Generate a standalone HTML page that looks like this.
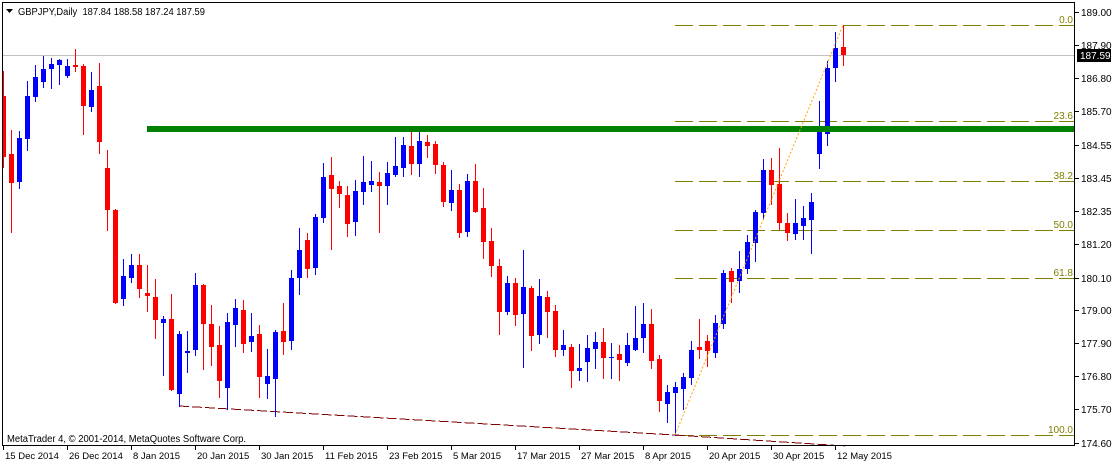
<!DOCTYPE html>
<html><head><meta charset="utf-8"><style>
html,body{margin:0;padding:0;background:#fff;}
svg{display:block;font-family:"Liberation Sans",sans-serif;}
</style></head><body>
<svg id="s" width="1115" height="464" viewBox="0 0 1115 464" xmlns="http://www.w3.org/2000/svg" shape-rendering="crispEdges">
<rect x="0" y="0" width="1115" height="464" fill="#fff"/>
<line x1="2" y1="55.5" x2="1075" y2="55.5" stroke="#c0c0c0"/>
<g stroke="#808000" stroke-dasharray="18,6">
<line x1="675" y1="25.5" x2="1075" y2="25.5"/>
<line x1="675" y1="121.5" x2="1075" y2="121.5"/>
<line x1="675" y1="181.5" x2="1075" y2="181.5"/>
<line x1="675" y1="230.5" x2="1075" y2="230.5"/>
<line x1="675" y1="278.5" x2="1075" y2="278.5"/>
<line x1="675" y1="435.5" x2="1075" y2="435.5"/>
</g>
<g fill="#808000" font-size="10" text-anchor="end">
<text x="1073" y="23">0.0</text>
<text x="1073" y="119">23.6</text>
<text x="1073" y="179">38.2</text>
<text x="1073" y="228">50.0</text>
<text x="1073" y="276">61.8</text>
<text x="1073" y="433">100.0</text>
</g>
<g stroke="#800000" stroke-dasharray="10,3" fill="none">
<line x1="179" y1="406" x2="675" y2="435"/>
<line x1="675" y1="435" x2="845" y2="446"/>
</g>
<g id="c"></g>
<rect x="147" y="126" width="928" height="6" fill="#008000"/>
<line x1="675" y1="435" x2="843" y2="25" stroke="#ffa500" stroke-dasharray="2,2" shape-rendering="auto"/>
<rect x="2.5" y="2.5" width="1072" height="443" fill="none" stroke="#000"/>
<g stroke="#000">
<line x1="1075" y1="12.5" x2="1079" y2="12.5"/><line x1="1075" y1="45.5" x2="1079" y2="45.5"/>
<line x1="1075" y1="78.5" x2="1079" y2="78.5"/><line x1="1075" y1="111.5" x2="1079" y2="111.5"/>
<line x1="1075" y1="145.5" x2="1079" y2="145.5"/><line x1="1075" y1="178.5" x2="1079" y2="178.5"/>
<line x1="1075" y1="211.5" x2="1079" y2="211.5"/><line x1="1075" y1="244.5" x2="1079" y2="244.5"/>
<line x1="1075" y1="278.5" x2="1079" y2="278.5"/><line x1="1075" y1="310.5" x2="1079" y2="310.5"/>
<line x1="1075" y1="343.5" x2="1079" y2="343.5"/><line x1="1075" y1="376.5" x2="1079" y2="376.5"/>
<line x1="1075" y1="409.5" x2="1079" y2="409.5"/><line x1="1075" y1="443.5" x2="1079" y2="443.5"/>
</g>
<g font-size="10" fill="#000">
<text x="1081" y="16">189.00</text><text x="1081" y="49">187.90</text>
<text x="1081" y="82">186.80</text><text x="1081" y="115">185.70</text>
<text x="1081" y="149">184.55</text><text x="1081" y="182">183.45</text>
<text x="1081" y="215">182.35</text><text x="1081" y="248">181.20</text>
<text x="1081" y="282">180.10</text><text x="1081" y="314">179.00</text>
<text x="1081" y="347">177.90</text><text x="1081" y="380">176.80</text>
<text x="1081" y="413">175.70</text><text x="1081" y="447">174.60</text>
</g>
<rect x="1077" y="49" width="34" height="13" fill="#000"/>
<text x="1080" y="59" font-size="10" fill="#fff">187.59</text>
<g id="d" font-size="9.5" fill="#000"></g>
<polygon points="6,9 13,9 9.5,13" fill="#000" shape-rendering="auto"/>
<text x="18" y="15" font-size="10" fill="#000" xml:space="preserve" textLength="187" lengthAdjust="spacingAndGlyphs">GBPJPY,Daily  187.84 188.58 187.24 187.59</text>
<text x="7" y="442" font-size="10" fill="#000" textLength="239" lengthAdjust="spacingAndGlyphs">MetaTrader 4, © 2001-2014, MetaQuotes Software Corp.</text>
</svg>
<script>
var D=[
['r',96,157,71,168],['r',154,183,130,233],['b',138,182,131,189],['b',96,139,81,151],['b',77,97,65,102],
['b',69,82,56,88],['b',64,69,58,89],['b',60,65,59,85],['b',66,76,59,78],['r',65,67,49,72],
['r',66,106,64,135],['b',90,107,72,112],['r',86,142,63,154],['r',168,210,150,231],['r',210,303,209,304],
['b',276,299,259,306],['b',265,278,254,283],['r',265,289,254,298],['r',293,296,265,312],['r',297,320,279,339],
['b',319,323,316,376],['r',319,390,294,391],['b',334,394,331,407],['b',351,353,331,373],['b',285,350,273,356],
['r',285,324,284,370],['r',324,347,305,366],['r',345,381,326,398],['b',322,388,313,410],['b',308,325,299,347],
['r',310,344,300,353],['b',336,342,313,352],['r',334,377,325,398],['b',376,384,349,399],['b',332,379,330,417],
['r',331,342,303,355],['b',278,341,270,350],['b',250,278,228,295],['r',240,269,233,278],['b',217,268,214,275],
['b',177,218,163,223],['r',175,189,157,250],['r',186,194,181,208],['r',195,224,186,237],['b',191,222,180,236],
['b',182,192,156,205],['b',181,185,161,192],['r',182,186,172,233],['b',173,186,162,205],['b',166,175,137,177],
['b',145,168,137,177],['r',146,164,132,175],['b',141,164,132,177],['r',142,146,135,158],['r',144,165,141,174],
['r',165,202,162,207],
['b',190,203,170,211],['r',190,233,184,238],['b',181,232,174,237],['r',181,212,164,213],['r',208,242,188,259],
['r',241,266,228,277],['r',266,312,259,335],['b',283,312,276,315],['r',283,315,278,326],['b',287,314,250,368],
['r',288,336,286,351],['b',296,335,279,344],['r',297,312,291,338],['r',311,350,305,357],['b',345,350,330,356],
['r',347,371,344,388],['b',368,371,344,381],['b',348,362,335,382],['b',342,349,332,369],['r',342,358,328,379],
['b',357,358,343,379],['r',354,360,345,381],['b',345,363,333,366],['b',338,350,306,351],['b',324,338,303,353],
['r',324,361,309,369],['r',359,401,355,412],['b',392,404,385,423],['b',387,393,382,436],['b',377,389,373,410],
['b',350,378,341,385],['r',347,350,319,359],['r',341,351,335,367],['b',323,353,315,358],['b',273,324,270,329],
['r',271,282,268,303],['b',269,281,251,293],['b',242,269,235,274],['b',212,243,210,262],['b',170,213,159,220],
['r',170,185,158,205],['r',184,223,148,230],['r',223,233,213,241],['b',223,234,199,240],['b',218,226,206,240],
['b',202,220,193,254],['b',131,154,101,169],['b',68,134,61,146],['b',48,68,32,82],['r',47,55,25,66]
];
var ns='http://www.w3.org/2000/svg',g=document.getElementById('c');
function el(t,a,p){var e=document.createElementNS(ns,t);for(var k in a)e.setAttribute(k,a[k]);(p||g).appendChild(e);return e;}
D.forEach(function(c,i){var x=3+8*i,col=c[0]=='r'?'#ff0000':'#0000ff';
el('rect',{x:x,y:c[3],width:1,height:c[4]-c[3],fill:col});
var bx=Math.max(x-2,3),bw=x+3-bx;
el('rect',{x:bx,y:c[1],width:bw,height:Math.max(c[2]-c[1],1),fill:col});});
var L=['15 Dec 2014','26 Dec 2014','8 Jan 2015','20 Jan 2015','30 Jan 2015','11 Feb 2015','23 Feb 2015','5 Mar 2015','17 Mar 2015','27 Mar 2015','8 Apr 2015','20 Apr 2015','30 Apr 2015','12 May 2015'];
var d=document.getElementById('d');
L.forEach(function(t,i){var x=3+64*i;el('rect',{x:x,y:446,width:1,height:4,fill:'#000'},d);var e=el('text',{x:x+2,y:459},d);e.textContent=t;});
</script>
</body></html>
